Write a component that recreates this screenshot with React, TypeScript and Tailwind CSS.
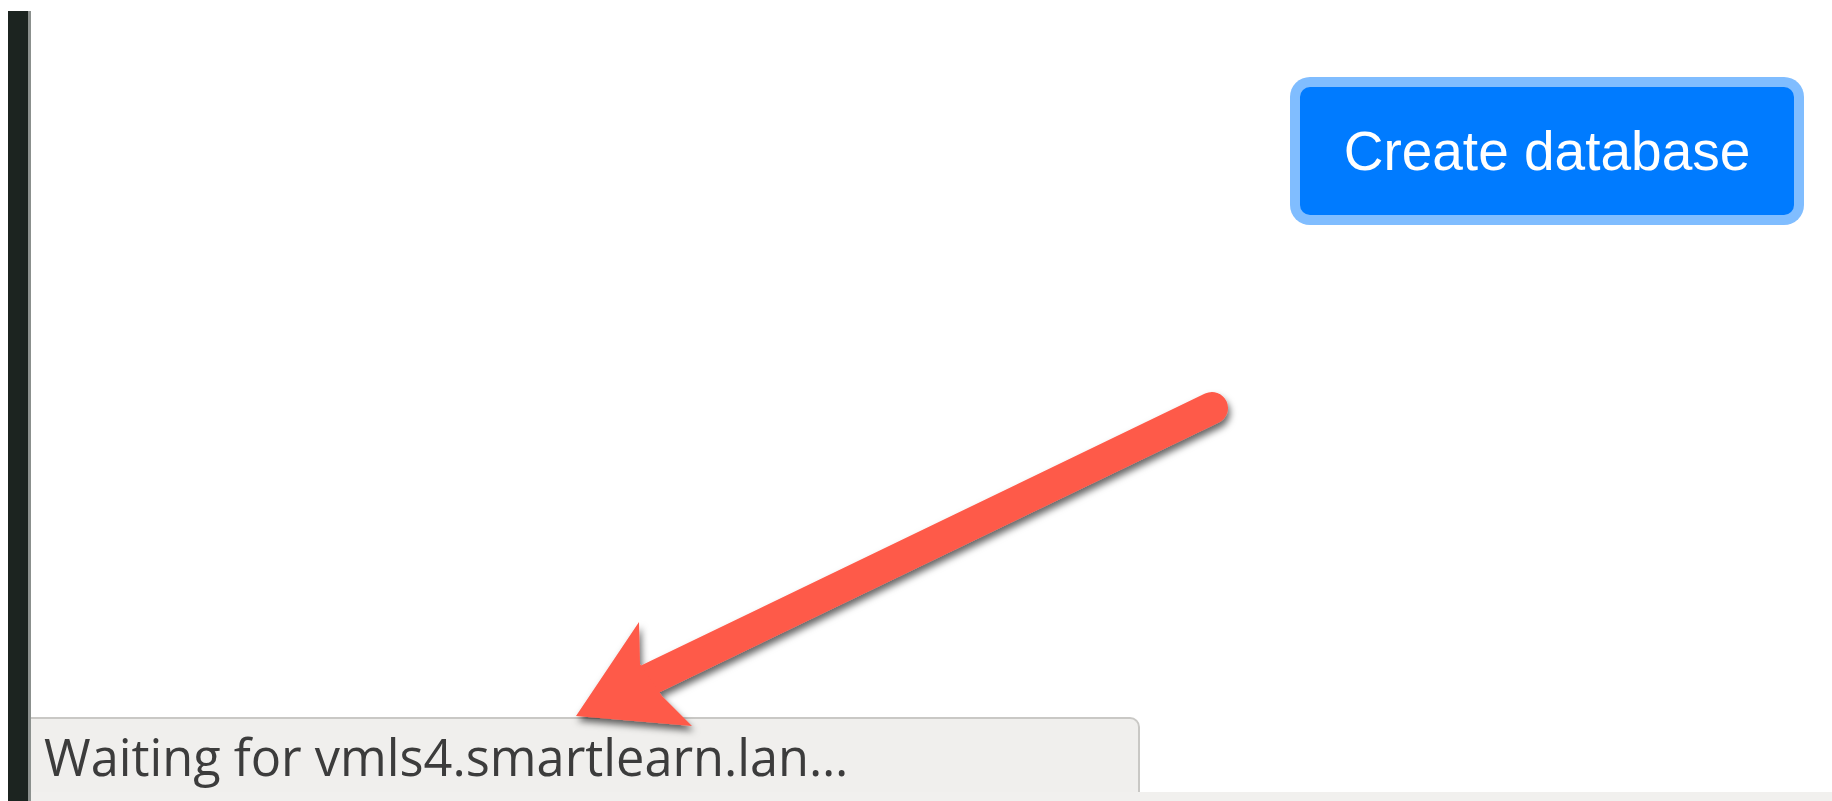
import React from "react";

const Arrow = () => (
  <svg
    className="absolute inset-0 pointer-events-none"
    width="1832"
    height="801"
    viewBox="0 0 1832 801"
  >
    <defs>
      <filter id="arrow-shadow" x="-10%" y="-10%" width="130%" height="130%">
        <feDropShadow dx="2" dy="5" stdDeviation="3.5" floodColor="#000" floodOpacity="0.6" />
      </filter>
    </defs>
    <g filter="url(#arrow-shadow)" fill="#fe5a4a">
      <line
        x1="1212"
        y1="408"
        x2="648"
        y2="680"
        stroke="#fe5a4a"
        strokeWidth="32"
        strokeLinecap="round"
      />
      <polygon points="576,716 639,622 640,664 662,696 692,726" />
    </g>
  </svg>
);

export default function App() {
  return (
    <div className="relative flex h-[801px] w-full overflow-hidden bg-white pl-[8px]">
      {/* dark side strip */}
      <div className="mt-[11px] w-[23px] shrink-0 border-r-[3px] border-[#8b908d] bg-[#1c2420]" />

      <div className="flex flex-1 flex-col">
        <div className="flex justify-end pt-[87px] pr-[38px]">
          <button
            className="flex h-[128px] w-[494px] items-center justify-center rounded-[10px] bg-[#007bff] text-[55px] text-white ring-[10px] ring-[#80bdff]"
            style={{ fontFamily: '"Liberation Sans", Arial, sans-serif' }}
          >
            Create database
          </button>
        </div>

        <div className="flex-1" />

        {/* status tooltip */}
        <div className="flex h-[75px] w-[1109px] items-end rounded-tr-[10px] border-t-2 border-r-2 border-[#c9c8c5] bg-[#f0efed] pb-[10px] pl-[13px]">
          <span
            className="text-[50.5px] leading-none text-[#3c3c3c]"
            style={{ fontFamily: '"Open Sans", "Noto Sans", sans-serif' }}
          >
            Waiting for vmls4.smartlearn.lan…
          </span>
        </div>
        <div className="h-[9px] bg-[#f1f0ee]" />
      </div>

      <Arrow />
    </div>
  );
}
